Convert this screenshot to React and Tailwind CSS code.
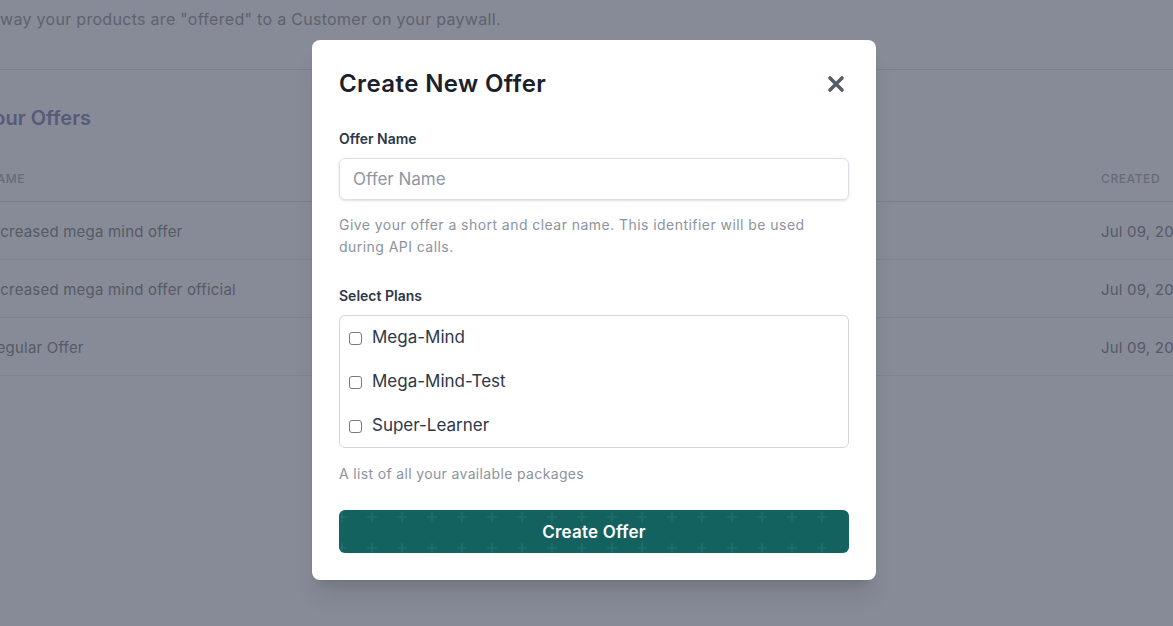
import React from 'react';

const OFFERS = [
    { name: 'Increased mega mind offer', created: 'Jul 09, 2023' },
    { name: 'Increased mega mind offer official', created: 'Jul 09, 2023' },
    { name: 'Regular Offer', created: 'Jul 09, 2023' },
];

const PLANS = ['Mega-Mind', 'Mega-Mind-Test', 'Super-Learner'];

export default function App() {
    return (
        <div className="relative h-[626px] w-full overflow-hidden bg-[#878b97] font-['Inter','Liberation_Sans',sans-serif]">
            {/* Dimmed page behind the modal */}
            <div className="-ml-[13px]">
                <div className="border-b border-[#7b7f8b] pt-[7px] pb-[38px]">
                    <p className="flex whitespace-nowrap text-base leading-6 tracking-[0.3px] text-[#5d626e]">
                        <span className="-ml-[187px] w-[200px] pr-[4px] text-right">Offers define the</span>
                        way your products are "offered" to a Customer on your paywall.
                    </p>
                </div>

                <h2 className="mt-[34px] -ml-[6px] text-xl leading-7 font-semibold text-[#555b78]">Your Offers</h2>

                <div className="mt-[25px]">
                    <div className="flex border-b border-[#7b7f8b] py-[14px] text-xs leading-4 font-medium uppercase tracking-wider text-[#666b77]">
                        <div className="w-[1114px] shrink-0">Name</div>
                        <div>Created</div>
                    </div>
                    {OFFERS.map(o => (
                        <div key={o.name} className="flex h-[58px] items-center border-b border-[#7e828e] pt-[3px] text-[15px] tracking-[0.2px] text-[#555a66]">
                            <div className="w-[1114px] shrink-0">{o.name}</div>
                            <div className="whitespace-nowrap">{o.created}</div>
                        </div>
                    ))}
                </div>
            </div>

            {/* Modal */}
            <div className="absolute left-[312px] top-[40px] w-[564px] rounded-lg bg-white px-[27px] pt-[28px] pb-[27px] shadow-xl">
                <div className="flex items-center justify-between">
                    <h1 className="text-2xl leading-8 font-semibold tracking-[0.4px] text-[#1a202c]">Create New Offer</h1>
                    <button className="flex h-[22px] w-[22px] items-center justify-start text-[#565d69]">
                        <svg width="18" height="18" viewBox="0 0 18 18" fill="none">
                            <path d="M3 3L15 15M15 3L3 15" stroke="currentColor" strokeWidth="3.6" strokeLinecap="round" />
                        </svg>
                    </button>
                </div>

                <label className="mt-[29px] block text-sm leading-5 font-semibold text-[#2d3748]">Offer Name</label>
                <input
                    type="text"
                    placeholder="Offer Name"
                    className="mt-[9px] block h-[42px] w-full rounded-md border border-[#dcdfe4] px-[13px] text-[17px] text-[#2d3748] shadow-sm placeholder:text-[#8f96a3] focus:outline-none"
                />
                <p className="mt-[14px] text-sm leading-[22px] tracking-[0.45px] text-[#8c93a0]">
                    Give your offer a short and clear name. This identifier will be used during API calls.
                </p>

                <label className="mt-[28px] block text-sm leading-5 font-semibold text-[#2d3748]">Select Plans</label>
                <div className="mt-[9px] h-[133px] rounded-md border border-[#d2d6dc]">
                    {PLANS.map(p => (
                        <label key={p} className="flex h-[44px] items-center gap-[10px] pl-[9px] text-[17px] text-[#2d3748]">
                            <input type="checkbox" className="h-[13px] w-[13px] appearance-none rounded-[3px] border border-[#7a7a7a] bg-white" />
                            {p}
                        </label>
                    ))}
                </div>
                <p className="mt-[15px] text-sm leading-[22px] tracking-[0.35px] text-[#8c93a0]">A list of all your available packages</p>

                <button className="relative mt-[25px] flex h-[43px] w-full items-center justify-center overflow-hidden rounded-md bg-[#13625f] pt-[2px] text-[17px] font-semibold tracking-[0.2px] text-white">
                    <svg className="absolute inset-0" width="100%" height="100%">
                        <defs>
                            <pattern id="plus" x="-12" y="-8" width="30" height="31" patternUnits="userSpaceOnUse">
                                <path d="M15 10V20M10 15H20" stroke="#1f6e6b" strokeWidth="1.5" />
                            </pattern>
                        </defs>
                        <rect width="100%" height="100%" fill="url(#plus)" />
                    </svg>
                    <span className="relative">Create Offer</span>
                </button>
            </div>
        </div>
    );
}
